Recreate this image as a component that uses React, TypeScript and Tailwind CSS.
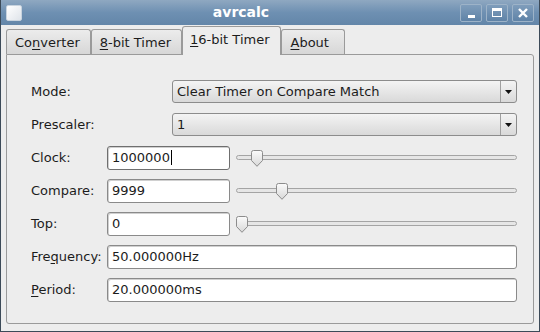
import React from "react";

const font = { fontFamily: '"DejaVu Sans", Verdana, sans-serif' };

function U({ children }: { children: React.ReactNode }) {
  return <span className="underline decoration-1 underline-offset-2">{children}</span>;
}

function Tab({ active, wide, children }: { active?: boolean; wide?: boolean; children: React.ReactNode }) {
  if (active) {
    return (
      <div className="relative z-10 -mb-px flex h-[29px] items-center rounded-t-[3px] border border-b-0 border-[#9a9a9a] bg-[#ededed] pb-[2px] pl-[7px] pr-[10px]">
        {children}
      </div>
    );
  }
  return (
    <div
      className={`flex h-[25px] items-center rounded-t-[3px] border border-b-0 border-[#9a9a9a] bg-gradient-to-b from-[#ececec] to-[#d7d7d7] pt-[1px] ${
        wide ? "pl-[9px] pr-[15px]" : "pl-[8px] pr-[10px]"
      }`}
    >
      {children}
    </div>
  );
}

function Combo({ value }: { value: string }) {
  return (
    <div className="flex h-[23px] flex-1 items-stretch rounded-[3px] border border-[#8c8c8c] bg-gradient-to-b from-[#f4f4f4] to-[#d9d9d9]">
      <div className="flex flex-1 items-center pl-[4px]">{value}</div>
      <div className="flex w-[16px] items-center justify-center border-l border-[#a0a0a0]">
        <svg width="7" height="4" viewBox="0 0 7 4">
          <path d="M0 0h7L3.5 4z" fill="#111" />
        </svg>
      </div>
    </div>
  );
}

function Entry({ value, caret, grow }: { value: string; caret?: boolean; grow?: boolean }) {
  return (
    <div
      className={`flex h-[24px] items-center rounded-[3px] border bg-white pl-[4px] shadow-[inset_1px_1px_0_#d0d0d0] ${
        grow ? "flex-1" : "w-[123px]"
      } ${caret ? "border-[#6f6f6f]" : "border-[#8a8a8a]"}`}
    >
      {value}
      {caret && <span className="ml-px inline-block h-[15px] w-px bg-black" />}
    </div>
  );
}

function Slider({ pos }: { pos: number }) {
  return (
    <div className="relative ml-[6px] flex h-[24px] flex-1 items-center">
      <div className="h-[5px] w-full rounded-full border border-[#a4a4a4] bg-[#e6e6e6]" />
      <svg
        className="absolute top-[4px]"
        style={{ left: pos }}
        width="12"
        height="17"
        viewBox="0 0 12 17"
      >
        <defs>
          <linearGradient id="th" x1="0" y1="0" x2="0" y2="1">
            <stop offset="0" stopColor="#fbfbfb" />
            <stop offset="1" stopColor="#d8d8d8" />
          </linearGradient>
        </defs>
        <path
          d="M2.5 0.5h7a2 2 0 0 1 2 2v8l-5.5 5.8l-5.5-5.8v-8a2 2 0 0 1 2-2z"
          fill="url(#th)"
          stroke="#8c8c8c"
        />
      </svg>
    </div>
  );
}

function Row({ children }: { children: React.ReactNode }) {
  return <div className="flex h-[33px] items-center">{children}</div>;
}

export default function App() {
  return (
    <div
      className="flex h-[332px] w-[540px] flex-col overflow-hidden border-x border-b border-[#3c4a58] bg-[#ededed] text-[13px] text-[#1c1c1c]"
      style={font}
    >
      {/* title bar */}
      <div className="flex h-[25px] shrink-0 items-center bg-gradient-to-b from-[#8fa8c1] via-[#6e90b2] to-[#6386a9] pl-[5px] pr-[5px]">
        <div className="h-[16px] w-[16px] rounded-[2px] border border-[#c8d3de] bg-gradient-to-br from-white to-[#dfe4ea]" />
        <span className="flex-1 text-center text-[14px] font-bold text-white">avrcalc</span>
        <div className="flex gap-[4px]">
          {["min", "max", "close"].map((k) => (
            <div
              key={k}
              className="flex h-[18px] w-[22px] items-center justify-center rounded-[2px] border border-[#9db3c8] bg-gradient-to-b from-[#7f9dbb] to-[#5f83a7]"
            >
              {k === "min" && <div className="mt-[7px] h-[3px] w-[7px] bg-white" />}
              {k === "max" && <div className="h-[9px] w-[10px] border-[1.5px] border-t-[3px] border-white" />}
              {k === "close" && (
                <svg width="10" height="10" viewBox="0 0 10 10">
                  <path d="M1 1l8 8M9 1l-8 8" stroke="white" strokeWidth="2.4" />
                </svg>
              )}
            </div>
          ))}
        </div>
      </div>

      {/* body */}
      <div className="flex flex-1 flex-col pl-[5px] pr-[5px] pt-[1px]">
        <div className="flex items-end">
          <Tab>
            Co<U>n</U>verter
          </Tab>
          <Tab>
            <U>8</U>-bit Timer
          </Tab>
          <Tab active>
            <U>1</U>6-bit Timer
          </Tab>
          <Tab wide>
            <U>A</U>bout
          </Tab>
        </div>
        <div className="h-[270px] rounded-b-[3px] rounded-tr-[3px] border border-[#9a9a9a] pl-[24px] pr-[16px] pt-[20px]">
          <Row>
            <span className="w-[141px]">Mode:</span>
            <Combo value="Clear Timer on Compare Match" />
          </Row>
          <Row>
            <span className="w-[141px]">Prescaler:</span>
            <Combo value="1" />
          </Row>
          <Row>
            <span className="w-[76px]">Clock:</span>
            <Entry value="1000000" caret />
            <Slider pos={15} />
          </Row>
          <Row>
            <span className="w-[76px]">Compare:</span>
            <Entry value="9999" />
            <Slider pos={40} />
          </Row>
          <Row>
            <span className="w-[76px]">Top:</span>
            <Entry value="0" />
            <Slider pos={0} />
          </Row>
          <Row>
            <span className="w-[76px]">
              Fre<U>q</U>uency:
            </span>
            <Entry value="50.000000Hz" grow />
          </Row>
          <Row>
            <span className="w-[76px]">
              <U>P</U>eriod:
            </span>
            <Entry value="20.000000ms" grow />
          </Row>
        </div>
      </div>
    </div>
  );
}
